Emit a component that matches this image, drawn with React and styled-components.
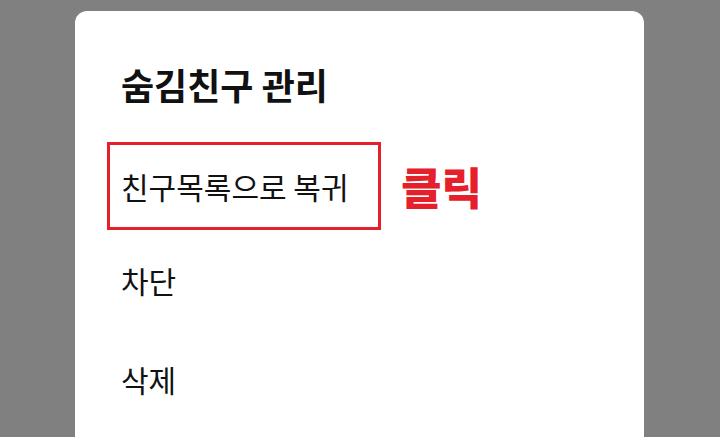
import React from "react";
import styled, { createGlobalStyle } from "styled-components";

const GlobalStyle = createGlobalStyle`
  html, body {
    margin: 0;
    padding: 0;
    background: #808080;
    overflow: hidden;
  }
  body {
    font-family: "Noto Sans CJK KR", "Noto Sans", sans-serif;
  }
`;

const Backdrop = styled.div`
  width: 720px;
  height: 437px;
  background: #808080;
  padding: 11px 0 0 75px;
  box-sizing: border-box;
  overflow: hidden;
`;

const Dialog = styled.div`
  width: 569px;
  height: 460px;
  background: #fff;
  border-radius: 12px;
  padding: 53px 0 0 46px;
  box-sizing: border-box;
`;

const Title = styled.h2`
  margin: 0;
  font-size: 36px;
  line-height: 40px;
  font-weight: 700;
  letter-spacing: 0;
  color: #111;
`;

const Menu = styled.ul`
  list-style: none;
  margin: 38px 0 0;
  padding: 0;
  display: flex;
  flex-direction: column;
`;

const Item = styled.li`
  display: flex;
  align-items: center;
  height: ${(p) => p.$h || 97}px;
  font-size: 30px;
  color: #111;
`;

const Highlight = styled.div`
  display: flex;
  align-items: center;
  width: 274px;
  height: 88px;
  margin-left: -14px;
  padding-left: 11px;
  box-sizing: border-box;
  border: 3px solid #e5202b;
`;

const ClickLabel = styled.span`
  margin-left: 20px;
  font-size: 44px;
  font-weight: 900;
  color: #e5202b;
`;

export default function App() {
  return (
    <>
      <GlobalStyle />
      <Backdrop>
        <Dialog>
          <Title>숨김친구 관리</Title>
          <Menu>
            <Item $h={88}>
              <Highlight>친구목록으로 복귀</Highlight>
              <ClickLabel>클릭</ClickLabel>
            </Item>
            <Item $h={100}>차단</Item>
            <Item>삭제</Item>
          </Menu>
        </Dialog>
      </Backdrop>
    </>
  );
}
